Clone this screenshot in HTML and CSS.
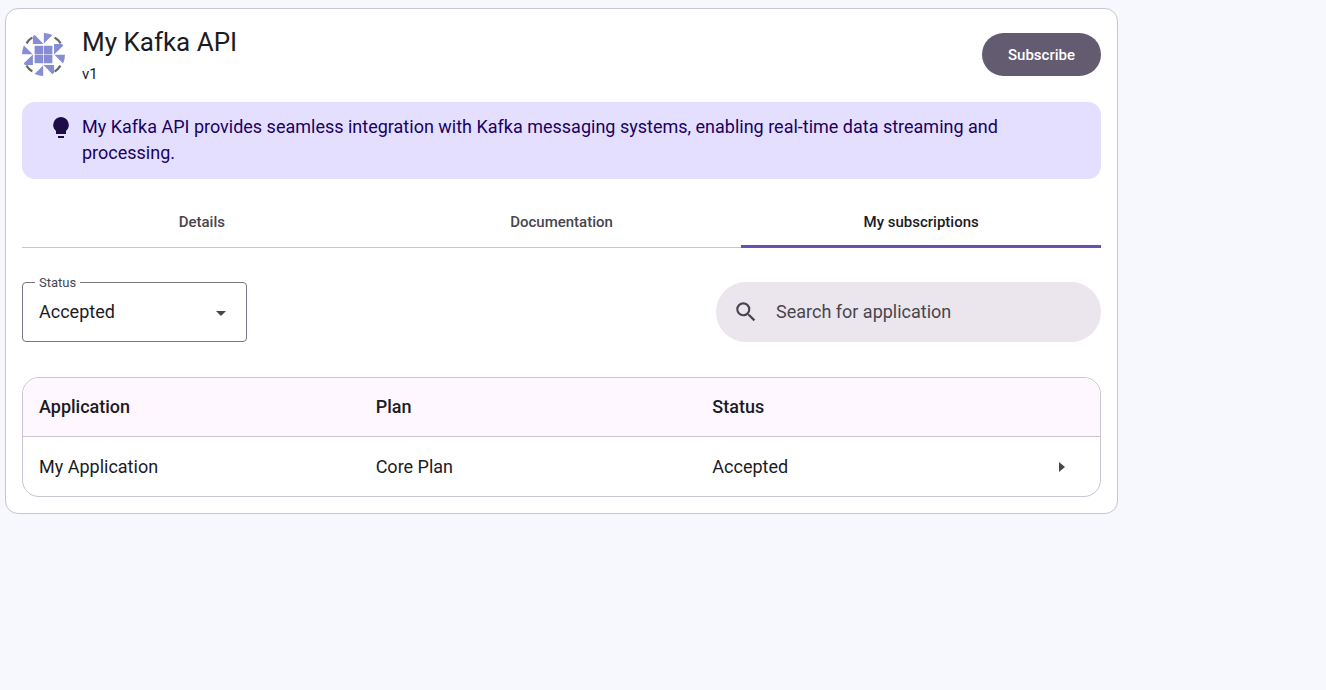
FILE: index.html
```html
<!DOCTYPE html>
<html lang="en">
<head>
<meta charset="utf-8">
<meta name="viewport" content="width=device-width, initial-scale=1">
<title>My Kafka API</title>
<link rel="stylesheet" href="styles.css">
</head>
<body>
<main class="card">
  <header class="header">
    <svg class="logo" viewBox="0 0 126 126" aria-hidden="true">
      <defs>
        <clipPath id="round"><circle cx="63" cy="63" r="63"/></clipPath>
        <g id="quarter">
          <path class="logo-ink" d="M37 37h25v25H37z"/>
          <path class="logo-ink" d="M32 0v32h31zM64 -1v32l32-32z"/>
          <path class="logo-dark" d="M13 30Q20 18 30 12"/>
        </g>
      </defs>
      <g clip-path="url(#round)">
        <use href="#quarter"/>
        <use href="#quarter" transform="rotate(90 63 63)"/>
        <use href="#quarter" transform="rotate(180 63 63)"/>
        <use href="#quarter" transform="rotate(270 63 63)"/>
      </g>
    </svg>
    <div class="heading">
      <h1 class="title">My Kafka API</h1>
      <p class="version">v1</p>
    </div>
    <button class="subscribe" type="button">Subscribe</button>
  </header>

  <section class="banner">
    <svg class="bulb" viewBox="0 0 26 26" aria-hidden="true">
      <path d="M13 3a8 8 0 0 0-5 14v3h10v-3A8 8 0 0 0 13 3zM10 22h6v2h-6z"/>
    </svg>
    <p class="banner-text">My Kafka API provides seamless integration with Kafka messaging systems, enabling real-time data streaming and processing.</p>
  </section>

  <nav class="tabs">
    <a class="tab" href="#details">Details</a>
    <a class="tab" href="#documentation">Documentation</a>
    <a class="tab tab-active" href="#subscriptions" aria-current="page">My subscriptions</a>
  </nav>

  <form class="filters">
    <fieldset class="field">
      <legend class="field-legend"><label for="status">Status</label></legend>
      <select class="select" id="status">
        <option>Accepted</option>
      </select>
      <svg class="caret" viewBox="0 0 10 5" aria-hidden="true"><path d="M0 0h10L5 5z"/></svg>
    </fieldset>
    <label class="search">
      <svg class="search-icon" viewBox="0 0 24 24" aria-hidden="true">
        <path d="M15.500 14h-.79l-.28-.27A6.470 6.470 0 0 0 16 9.500 6.500 6.500 0 1 0 9.500 16c1.610 0 3.090-.59 4.230-1.570l.27.28v.79l5 4.990L20.490 19l-4.990-5zm-6 0C7.010 14 5 11.990 5 9.500S7.010 5 9.500 5 14 7.010 14 9.500 11.990 14 9.500 14z"/>
      </svg>
      <input class="search-input" type="search" placeholder="Search for application" aria-label="Search for application">
    </label>
  </form>

  <div class="table-frame">
    <table class="table">
      <thead>
        <tr><th>Application</th><th>Plan</th><th>Status</th><th class="arrow-cell"></th></tr>
      </thead>
      <tbody>
        <tr>
          <td>My Application</td><td>Core Plan</td><td>Accepted</td>
          <td class="arrow-cell"><svg class="arrow" viewBox="0 0 6 10" aria-hidden="true"><path d="M0 0v10l6-5z"/></svg></td>
        </tr>
      </tbody>
    </table>
  </div>
</main>
</body>
</html>
```
FILE: styles.css
```css
* {
  box-sizing: border-box;
}

body {
  margin: 0;
  padding: 8px 5px;
  background: #f7f8fd;
  color: #1c1b1f;
  font-family: Roboto, "Liberation Sans", sans-serif;
  font-size: 18px;
  line-height: 26px;
}

.card {
  max-width: 1113px;
  padding: 16px;
  border: 1px solid #cac4d0;
  border-radius: 13px;
  background: #fff;
}

.header {
  display: flex;
  align-items: center;
  gap: 17px;
}

.logo {
  width: 43px;
  height: 43px;
}

.logo-ink {
  fill: #868dd4;
}

.logo-dark {
  fill: none;
  stroke: #666;
  stroke-width: 8px;
}

.heading {
  flex: 1;
}

.title {
  margin: 0;
  font-size: 26px;
  font-weight: 400;
  line-height: 34px;
}

.version {
  margin: 0;
  padding-top: 5px;
  font-size: 15px;
  line-height: 20px;
}

.subscribe {
  height: 43px;
  padding: 0 26px;
  border: 0;
  border-radius: 22px;
  background: #635b70;
  color: #fff;
  font: 500 15px/22px Roboto, "Liberation Sans", sans-serif;
}

.banner {
  display: flex;
  gap: 8px;
  margin-top: 18px;
  padding: 12px 17px 13px 26px;
  border-radius: 13px;
  background: #e4dfff;
  color: #1b0261;
}

.bulb {
  flex: none;
  width: 26px;
  height: 26px;
  fill: #1f0c47;
}

.banner-text {
  margin: 0;
}

.tabs {
  display: flex;
  margin-top: 17px;
  border-bottom: 1px solid #cac4d0;
}

.tab {
  flex: 1;
  margin-bottom: -1px;
  padding: 13px 0 10px;
  border-bottom: 3px solid transparent;
  color: #49454e;
  font-size: 15px;
  font-weight: 500;
  text-align: center;
  text-decoration: none;
}

.tab-active {
  border-color: #6750b0;
  color: #1c1b1f;
}

.filters {
  display: flex;
  justify-content: space-between;
  align-items: flex-end;
  margin-top: 26px;
}

.field {
  position: relative;
  width: 225px;
  height: 68px;
  margin: 0;
  padding: 0;
  border: 1px solid #79747e;
  border-radius: 4px;
}

.field-legend {
  margin-left: 12px;
  padding: 0 4px;
  color: #49454e;
  font-size: 13px;
  line-height: 17px;
}

.select {
  width: 100%;
  height: 42px;
  padding: 0 16px;
  border: 0;
  background: transparent;
  color: inherit;
  font: inherit;
  appearance: none;
}

.caret {
  position: absolute;
  top: 20px;
  right: 20px;
  width: 10px;
  height: 5px;
  fill: #49454e;
  pointer-events: none;
}

.search {
  display: flex;
  align-items: center;
  gap: 17px;
  width: 385px;
  height: 60px;
  padding: 0 17px;
  border-radius: 30px;
  background: #ebe6ed;
}

.search-icon {
  flex: none;
  width: 26px;
  height: 26px;
  fill: #49454e;
}

.search-input {
  flex: 1;
  min-width: 0;
  padding: 0;
  border: 0;
  background: transparent;
  color: #1c1b1f;
  font: inherit;
}

.search-input::placeholder {
  color: #49454e;
  opacity: 1;
}

.table-frame {
  margin-top: 35px;
  overflow: hidden;
  border: 1px solid #cac4d0;
  border-radius: 17px;
}

.table {
  width: 100%;
  border-collapse: separate;
  border-spacing: 0;
  table-layout: fixed;
}

.table th,
.table td {
  height: 59px;
  padding: 0 16px;
  text-align: left;
}

.table th {
  border-bottom: 1px solid #cac4d0;
  background: #fef7ff;
  font-weight: 500;
}

.table .arrow-cell {
  width: 67px;
}

.table td.arrow-cell {
  padding: 0 26px;
}

.arrow {
  display: block;
  width: 6px;
  height: 10px;
  fill: #49454e;
}
```
